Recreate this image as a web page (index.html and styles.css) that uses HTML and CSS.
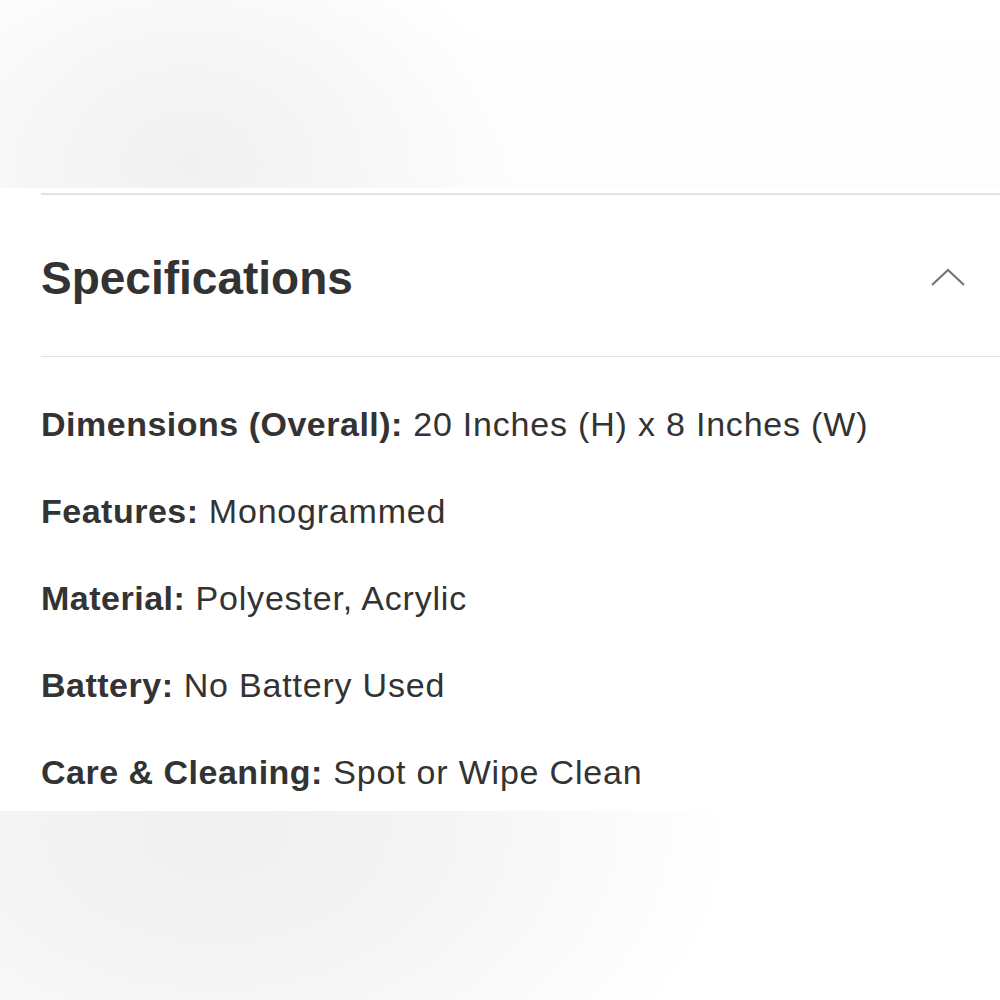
FILE: index.html
```html
<!DOCTYPE HTML>
<html lang="en">
<head>
  <meta charset="UTF-8">
  <title>Specifications</title>
  <link rel="stylesheet" href="styles.css">
</head>
<body>

	<div class="backdrop backdrop-top"></div>

	<div class="panel">
		<div class="section-head">
			<h2 class="section-title">Specifications</h2>
			<svg class="chevron" width="36" height="20" viewBox="0 0 36 20">
				<polyline points="2,18 18,3 34,18" fill="none" stroke="#777" stroke-width="2.2"/>
			</svg>
		</div>

		<ul class="specs">
			<li><b>Dimensions (Overall):</b> 20 Inches (H) x 8 Inches (W)</li>
			<li><b>Features:</b> Monogrammed</li>
			<li><b>Material:</b> Polyester, Acrylic</li>
			<li><b>Battery:</b> No Battery Used</li>
			<li><b>Care &amp; Cleaning:</b> Spot or Wipe Clean</li>
		</ul>
	</div>

	<div class="backdrop backdrop-bottom"></div>

</body>
</html>
```

FILE: styles.css
```css
html { height:100%; }

body {
	margin:0;
	background:#fff;
	font-family:"Liberation Sans", Arial, sans-serif;
	color:#333;
}

.backdrop { width:100%; }

.backdrop-top {
	height:188px;
	background:
		radial-gradient(ellipse 330px 260px at 190px 165px, #f1f1f1 0%, #f6f6f6 45%, rgba(255,255,255,0) 100%),
		linear-gradient(to bottom, #fff 0%, #fdfdfd 100%);
}

.backdrop-bottom {
	height:189px;
	background:
		radial-gradient(ellipse 520px 340px at 215px 20px, #f0f0f0 0%, #f4f4f4 40%, rgba(255,255,255,0) 100%),
		#fff;
}

.panel {
	background:#fff;
	height:623px;
	padding:5px 0 0 41px;
	box-sizing:border-box;
}

.section-head {
	display:flex;
	align-items:center;
	justify-content:space-between;
	height:164px;
	padding-right:34px;
	border-top:2px solid #e2e2e2;
	border-bottom:1px solid #e2e2e2;
	box-sizing:border-box;
}

.section-title {
	margin:4px 0 0 0;
	font-size:46px;
	font-weight:bold;
	color:#333;
}

.chevron { display:block; margin-top:2px; }

.specs {
	list-style:none;
	margin:0;
	padding:24px 0 0 0;
}

.specs li {
	font-size:34px;
	letter-spacing:0.8px;
	line-height:87px;
	height:87px;
	white-space:nowrap;
}

.specs b {
	font-weight:bold;
	letter-spacing:0.5px;
}
```
